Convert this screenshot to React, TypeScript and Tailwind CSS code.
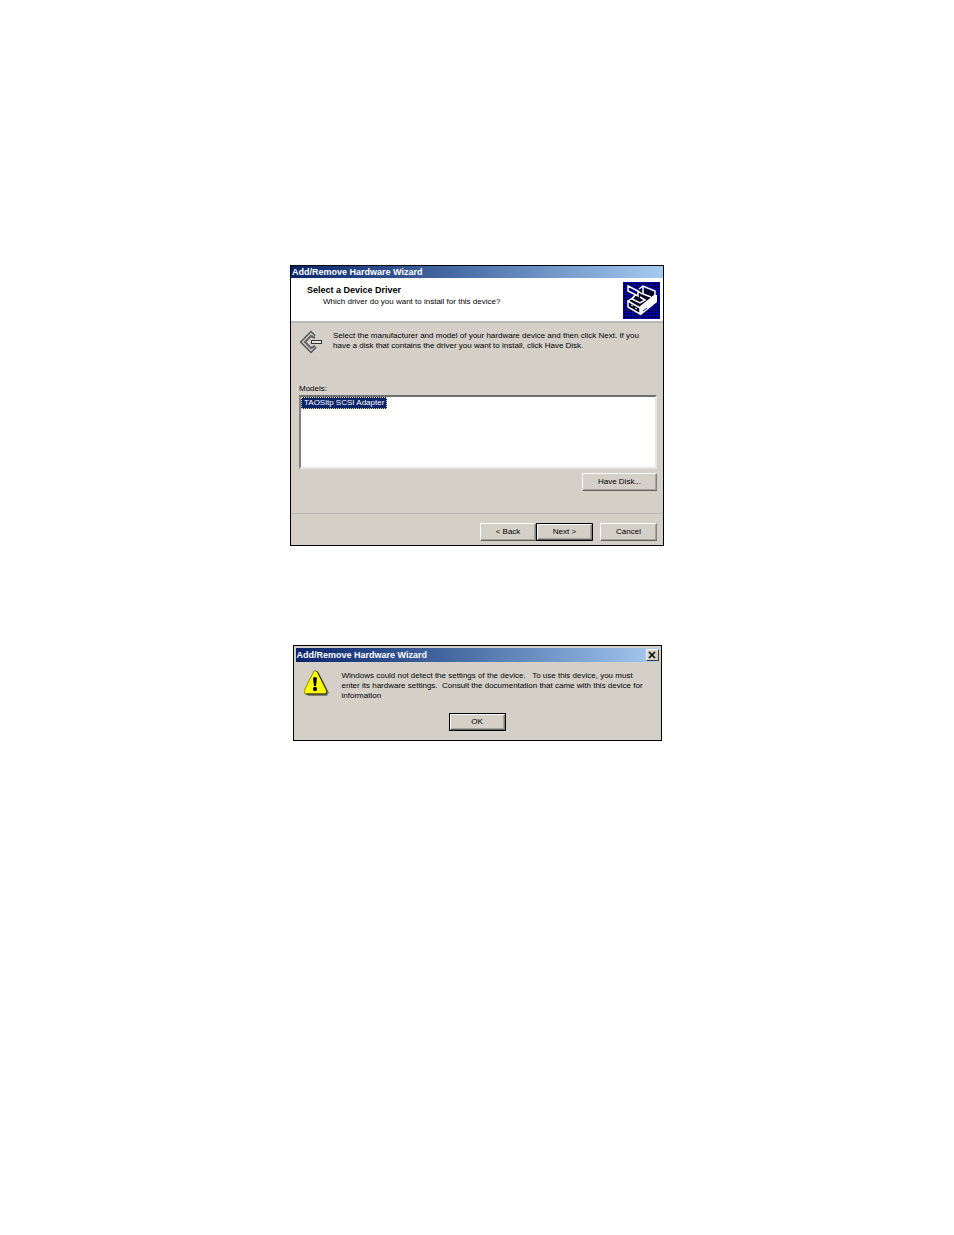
import type { ReactNode } from 'react'

const AdapterIcon = () => (
  <svg className="size-6 shrink-0" viewBox="0 0 24 24" fill="none" aria-hidden="true">
    <path d="M16 6 12 2 2 12l10 10 5-5" stroke="#555" strokeWidth="2" />
    <path d="M15 7 12 4 4 12l8 8 4-4" stroke="#c4c4c4" strokeWidth="2" />
    <path d="M16 8 12 6 6 12l6 6 4-2" stroke="#666" strokeWidth="2" />
    <path d="M12 10h11v4H12z" fill="#333" />
    <path d="M13 11h9v2h-9z" fill="#e8e8e8" />
  </svg>
)

const HardwareIcon = () => (
  <svg className="size-[37px] shrink-0" viewBox="0 0 37 37" aria-hidden="true">
    <defs>
      <pattern id="weave" width="3" height="3" patternUnits="userSpaceOnUse">
        <path d="M0 0h3v3H0z" fill="#0000b8" />
        <path d="M1 1h2v2H1z" fill="#000030" />
      </pattern>
    </defs>
    <path d="M0 0h37v37H0z" fill="#0000b0" />
    <path d="M1 1h35v35H1z" fill="url(#weave)" />
    <path d="m5 20 14-14 13 4 2 9-16 14L5 26z" fill="#000020" />
    <path d="m17 25 15-12h2v7L18 33h-1z" fill="#fff" />
    <path d="m5 19 12 7v6L5 25zM5 19l6-4M17 25l15-12V9l-12-5-4 3" fill="none" stroke="#fff" strokeWidth="1.5" />
    <path d="m5 4 10 5v5L5 9zM12 13l-3 4 8 4 5-3-5-3M20 5v7l8 3M15 9l4 3" fill="none" stroke="#fff" strokeWidth="1.5" />
    <path d="m8 23 2 1M12 26l2 1" stroke="#fff" />
    <path d="m20 29 4-3" stroke="#0000b0" />
  </svg>
)

const WarningIcon = () => (
  <svg className="size-[26px] shrink-0" viewBox="0 0 26 26" aria-hidden="true">
    <path d="M13 3h2l10 20-2 3H4l-1-2z" fill="#808080" />
    <path d="M10 1h3l10 20-1 3H1l-1-3z" fill="#ff0" stroke="#8a8a00" />
    <path d="m13 1 10 20-1 3H2" fill="none" stroke="#222" />
    <path d="M9 8q2-2 4 0l-1 8h-2z" fill="#000" />
    <path d="M10 17h2l1 1v2l-1 1h-2l-1-1v-2z" fill="#000" />
  </svg>
)

const TitleBar = ({ title, children }: { title: string; children?: ReactNode }) => (
  <div className="flex items-center justify-between bg-linear-to-r from-[#0a246a] to-[#a6caf0]">
    <h2 className="pl-px text-[9px] leading-3 font-bold whitespace-nowrap text-white">{title}</h2>
    {children}
  </div>
)

const Raised = ({ className, children }: { className: string; children: ReactNode }) => (
  <button
    type="button"
    className={`flex items-center justify-center border border-t-white border-r-[#808080] border-b-[#606060] border-l-white bg-[#d4d0c8] text-[8px] leading-3 shadow-[inset_-1px_-1px_#a8a49c] ${className}`}
  >
    {children}
  </button>
)

const DefaultButton = ({ children }: { children: ReactNode }) => (
  <div className="flex border border-black">
    <Raised className="h-4 w-[55px]">{children}</Raised>
  </div>
)

const DriverWizard = () => (
  <section className="w-full max-w-[374px] border border-black bg-[#d4d0c8]">
    <TitleBar title="Add/Remove Hardware Wizard" />
    <header className="flex items-start justify-between border-b-2 border-[#b8b8b8] bg-white pt-1 pr-[3px] pb-0.5 pl-4">
      <div className="pt-0.5">
        <h3 className="text-[9px] leading-3 font-bold">Select a Device Driver</h3>
        <p className="pl-4 text-[8px] leading-3">Which driver do you want to install for this device?</p>
      </div>
      <HardwareIcon />
    </header>
    <div className="pt-[7px] pr-1.5 pb-[22px] pl-2">
      <div className="flex gap-2.5">
        <AdapterIcon />
        <p className="pt-px text-[8px] leading-[10px] whitespace-nowrap">
          Select the manufacturer and model of your hardware device and then click Next. If you
          <br />
          have a disk that contains the driver you want to install, click Have Disk.
        </p>
      </div>
      <h4 id="models" className="pt-[29px] text-[8px] leading-3">Models:</h4>
      <ul
        role="listbox"
        aria-labelledby="models"
        className="h-[74px] border-2 border-t-[#707070] border-r-[#e8e6e0] border-b-[#e8e6e0] border-l-[#808080] bg-white"
      >
        <li
          role="option"
          aria-selected="true"
          className="w-fit border border-dotted border-[#e8d890] bg-[#0a246a] px-0.5 text-[8px] leading-[10px] text-white"
        >
          TAOSitp SCSI Adapter
        </li>
      </ul>
      <div className="flex justify-end pt-1">
        <Raised className="h-[18px] w-[75px]">Have Disk...</Raised>
      </div>
    </div>
    <footer className="flex items-center justify-end border-t border-[#b8b8b8] pt-[9px] pr-1.5 pb-1">
      <Raised className="h-[18px] w-14">&lt; Back</Raised>
      <DefaultButton>Next &gt;</DefaultButton>
      <Raised className="ml-[7px] h-[18px] w-[57px]">Cancel</Raised>
    </footer>
  </section>
)

const SettingsAlert = () => (
  <section className="w-full max-w-[369px] border border-black bg-[#d4d0c8] px-0.5 pt-0.5 pb-[9px]">
    <TitleBar title="Add/Remove Hardware Wizard">
      <button
        type="button"
        aria-label="Close"
        className="my-px flex h-3 w-[13px] items-center justify-center border border-t-white border-r-[#404040] border-b-[#404040] border-l-white bg-[#d4d0c8]"
      >
        <svg className="size-2" viewBox="0 0 8 8" stroke="#000" strokeWidth="1.5" aria-hidden="true">
          <path d="m1 1 6 6M7 1 1 7" />
        </svg>
      </button>
    </TitleBar>
    <div className="flex gap-3 pt-2 pl-2">
      <WarningIcon />
      <p className="pt-px text-[8px] leading-[10px] whitespace-pre">
        {'Windows could not detect the settings of the device.   To use this device, you must\nenter its hardware settings.  Consult the documentation that came with this device for\ninformation'}
      </p>
    </div>
    <div className="flex justify-center pt-3">
      <DefaultButton>OK</DefaultButton>
    </div>
  </section>
)

export default function App() {
  return (
    <main className="flex min-h-screen flex-col items-center gap-[99px] bg-white pt-[265px] font-['Liberation_Sans',Arial,sans-serif] text-black">
      <DriverWizard />
      <SettingsAlert />
    </main>
  )
}
